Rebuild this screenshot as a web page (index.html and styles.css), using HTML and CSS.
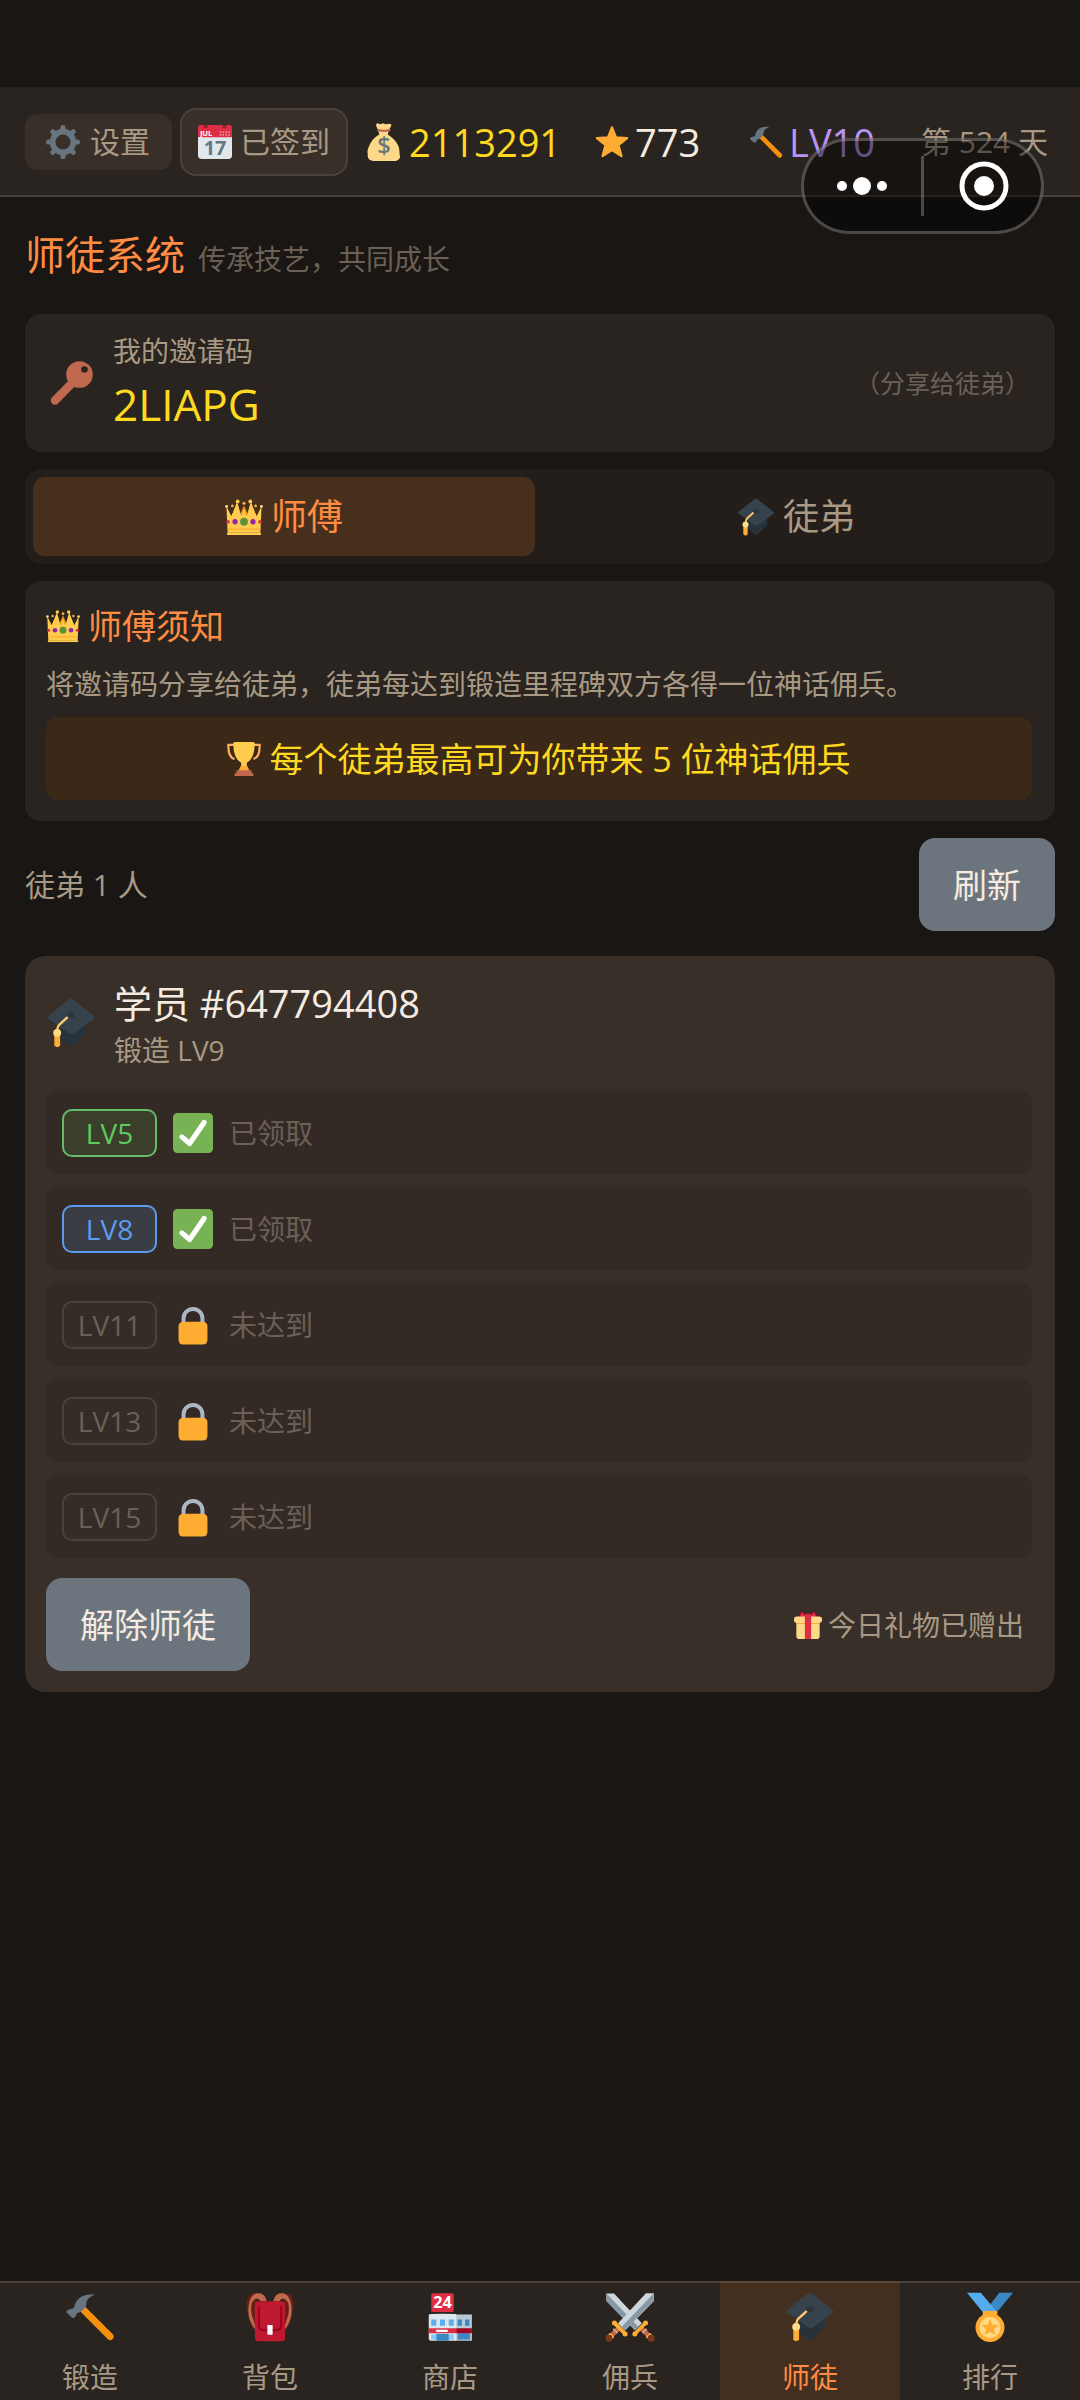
FILE: index.html
```html
<!DOCTYPE html>
<html lang="zh-CN">
<head>
<meta charset="utf-8">
<meta name="viewport" content="width=device-width, initial-scale=1">
<title>师徒系统</title>
<link rel="stylesheet" href="styles.css">
</head>
<body>
<svg class="sprite" aria-hidden="true">
  <symbol id="gear" viewBox="0 0 36 36">
    <circle cx="18" cy="18" r="11" fill="none" stroke="#66757f" stroke-width="6"/>
    <path d="M18 5V2.700M18 31v2.300M5 18H2.700M31 18h2.300M8.800 8.800 7.200 7.200M27.200 27.200l1.600 1.600M8.800 27.200l-1.600 1.600M27.200 8.800l1.600-1.600" stroke="#66757f" stroke-width="5.400" stroke-linecap="round"/>
  </symbol>
  <symbol id="star" viewBox="0 0 36 36">
    <path d="M18 2.500 22.200 13.200 34 13.800 24.800 21.200 28 33 18 26.500 8 33 11.200 21.200 2 13.800 13.800 13.200z" fill="#ffac33" stroke="#ffac33" stroke-width="2.400" stroke-linejoin="round"/>
  </symbol>
  <symbol id="hammer" viewBox="0 0 36 36">
    <path d="M13 12.500 32.500 32" stroke="#f4900c" stroke-width="5" stroke-linecap="round"/>
    <path d="M1.500 13.500C3 12 6 12.500 6.500 11 8 4.500 13 .800 21.500 2c-4 1.500-6 3.500-6.200 7 .4 1.600-4.300 6.500-6 6-1.300.2-.8 2-2.300 3.300-1 .8-1.800.4-2.500-.3L1.300 15c-.5-.5-.4-1 .2-1.500z" fill="#66757f"/>
  </symbol>
  <symbol id="key" viewBox="0 0 44 44">
    <path d="M25 19 5 39.500" stroke="#c1694f" stroke-width="8.500" stroke-linecap="round"/>
    <circle cx="29.500" cy="13.500" r="13.300" fill="#c1694f"/>
    <circle cx="34.500" cy="8.500" r="3.300" fill="#2b241f"/>
    <path d="M12 26 9 29l-1-2zM6 31l-4 4 0-3z" fill="#29241f"/>
  </symbol>
  <symbol id="crown" viewBox="0 0 36 36">
    <path d="M3 12l3 5 4-8 4 7 4-9 4 9 4-7 4 8 3-5v12H3z" fill="#f4900c"/>
    <circle cx="7" cy="7.500" r="1.300" fill="#ffac33"/><circle cx="18" cy="5" r="1.500" fill="#ffac33"/><circle cx="29" cy="7.500" r="1.300" fill="#ffac33"/>
    <path d="M2.500 33 1.300 7.500 6 17.500 11.500 3.500l4 14L18 10l2.500 7.500 4-14L30 17.500l4.700-10L33.500 33z" fill="#ffcc4d"/>
    <circle cx="12" cy="3.200" r="1.800" fill="#ffcc4d"/><circle cx="24" cy="3.200" r="1.800" fill="#ffcc4d"/><circle cx="1.500" cy="8" r="1.400" fill="#ffd983"/><circle cx="34.500" cy="8" r="1.400" fill="#ffd983"/>
    <path d="M2.500 29.500h31" stroke="#ffac33" stroke-width="1.300"/><path d="M2 34h32" stroke="#ffcc4d" stroke-width="2"/>
    <circle cx="18" cy="22.500" r="3.700" fill="#5c913b"/><circle cx="9.500" cy="22.500" r="2.500" fill="#9226aa"/><circle cx="26.500" cy="22.500" r="2.500" fill="#9226aa"/>
    <circle cx="2.800" cy="22.500" r="1.700" fill="#dd2e44"/><circle cx="33.200" cy="22.500" r="1.700" fill="#dd2e44"/>
  </symbol>
  <symbol id="cap" viewBox="0 0 36 38">
    <path d="M10 19l18-5c2 3 1.500 11 .5 14L20 36c-1 .8-3 .8-4 0l-6-5z" fill="#28323a"/>
    <path d="M16.300 1.200c1-.8 2.400-.8 3.400 0L35.300 13.700c.8.600.8 1.500 0 2.200L21 26.500c-1.500 1.200-3.500 1.200-5 0L.800 15.800c-.8-.6-.8-1.500 0-2.200z" fill="#37434c"/>
    <ellipse cx="18" cy="13" rx="3" ry="2.400" fill="#2d363d"/>
    <path d="M15 15 9 20.500Q7.500 22 7.500 26" stroke="#ffcc6b" stroke-width="1.800" fill="none" stroke-linecap="round"/>
    <path d="M5.300 27h4.400v9q-2.200 3-4.400 0z" fill="#ffac33"/><circle cx="7.500" cy="26.500" r="3" fill="#ffd983"/>
  </symbol>
  <symbol id="trophy" viewBox="0 0 36 36">
    <path d="M8 3H1.500Q1 16 8 18M28 3h6.500Q35 16 28 18" stroke="#ffac62" stroke-width="2.400" fill="none"/>
    <path d="M6.500 1.500Q7 0 8.500 0h19q1.500 0 2 1.500Q29 18 21 22v3l3 6H12l3-6v-3Q7 18 6.500 1.500z" fill="#ffcc4d"/>
    <path d="M15 25.500h6l3 5.500H12z" fill="#ffac33"/>
    <path d="M10 30h16v3h2v3H8v-3h2z" fill="#c1694f"/>
  </symbol>
  <symbol id="check" viewBox="0 0 36 36">
    <rect width="36" height="36" rx="4" fill="#77b255"/>
    <path d="M8 21.500 15 27.500 28 8.500" fill="none" stroke="#fff" stroke-width="4.600" stroke-linecap="round" stroke-linejoin="round"/>
  </symbol>
  <symbol id="lock" viewBox="0 0 36 36">
    <path d="M9.500 18V12a8.500 8.500 0 0 1 17 0v6" fill="none" stroke="#aab8c2" stroke-width="3.600"/>
    <rect x="5" y="15" width="26" height="20.500" rx="4" fill="#ffac33"/>
  </symbol>
  <symbol id="gift" viewBox="0 0 36 36">
    <path d="M18 6Q13 0 9 1L5 8h26l-4-7q-4-1-9 5z" fill="#a0041e"/><path d="M10 1l-3 7h9zM26 1l3 7h-9z" fill="#dd2e44"/>
    <path d="M3 13h30v19a4 4 0 0 1-4 4H7a4 4 0 0 1-4-4z" fill="#fdd888"/><path d="M3 16h30" stroke="#fcab40" stroke-width="1.400"/>
    <rect y="7" width="36" height="8" rx="3.500" fill="#fdd888"/><path d="M14 5q4-3 8 0v31h-8z" fill="#dd2e44"/>
  </symbol>
  <symbol id="pack" viewBox="0 0 36 38">
    <path d="M8 1Q-1 0 .5 12 1.500 25 8 31zM28 1q9-1 7.500 11Q34.500 25 28 31z" fill="#662113"/>
    <path d="M2.500 7Q4 2 8 1q6-1 7.500 6H11Q8 3 5 7Q3 9 4 17L8 30Q-1 20 2.500 7zM33.500 7Q32 2 28 1q-6-1-7.500 6H25q3-4 6 0 2 2 1 10L28 30q9-10 5.500-23z" fill="#c1694f"/>
    <rect x="6.500" y="7" width="23" height="30.500" rx="3" fill="#be1931"/>
    <path d="M9.500 10.500V25q0 4 4 4h9q4 0 4-4V10.500" fill="none" stroke="#a0041e" stroke-width="1.700"/>
    <rect x="16" y="25" width="4" height="7.500" rx=".5" fill="#fff"/>
  </symbol>
  <symbol id="swords" viewBox="0 0 36 36">
    <g id="sword">
      <path d="M35 1v5.500L14.500 27.500 9.500 22.500 29.500 1z" fill="#ccd6dd"/><path d="M35 1v5.500L14.500 27.500 12 25z" fill="#8899a6"/>
      <path d="M11 25 3.500 32.500" stroke="#c1694f" stroke-width="3.400"/><path d="M6 26.500l3 3" stroke="#e6a08a" stroke-width="1.300"/>
      <path d="M7 22.500 14.500 30" stroke="#ffac33" stroke-width="2.600" stroke-linecap="round"/><circle cx="6.800" cy="22.300" r="1.800" fill="#ffac33"/><circle cx="14.500" cy="30.200" r="1.800" fill="#ffac33"/>
      <path d="M3.500 30.500l2 2" stroke="#ffac33" stroke-width="2" stroke-linecap="round"/><circle cx="2.800" cy="33.300" r="2.500" fill="#7b3722"/>
    </g>
    <use href="#sword" transform="translate(36 0) scale(-1 1)"/>
    <path d="M35 1v5.500L14.500 27.500 9.500 22.500 29.500 1z" fill="#ccd6dd"/><path d="M35 1v5.500L14.500 27.500 12 25z" fill="#8899a6"/>
    <path d="M7 22.500 14.500 30" stroke="#ffac33" stroke-width="2.600" stroke-linecap="round"/>
  </symbol>
  <symbol id="medal" viewBox="0 0 36 38">
    <path d="M25 .5h10.500L22 17l-5-6z" fill="#3b88c3"/><path d="M.5.500H11L24 16H13z" fill="#55acee"/>
    <rect x="12.500" y="14.500" width="11" height="5" rx="1" fill="#ffac33"/>
    <circle cx="18" cy="27" r="11" fill="#ffac33"/><circle cx="18" cy="27" r="8" fill="#ffd983"/>
    <path d="M18 20.500l1.800 4.300 4.700.4-3.600 3 1.100 4.500-4-2.400-4 2.400 1.100-4.500-3.600-3 4.700-.4z" fill="#ffac33"/>
  </symbol>
</svg>

<div class="app">
  <header class="topbar">
    <button class="chip" type="button"><svg class="ico ico-m"><use href="#gear"/></svg>设置</button>
    <button class="chip chip-outlined" type="button">
      <svg class="ico ico-m" viewBox="0 0 36 36">
        <path d="M0 11h36v21a4 4 0 0 1-4 4H4a4 4 0 0 1-4-4z" fill="#e1e8ed"/>
        <path d="M3 0h30a3 3 0 0 1 3 3v10H0V3a3 3 0 0 1 3-3z" fill="#dd2e44"/>
        <circle cx="8" cy="1" r="2.600" fill="#992233"/><circle cx="28" cy="1" r="2.600" fill="#992233"/>
        <path d="M23 7.500h11M23 10.500h11" stroke="#f5b8c0" stroke-width="1.300" stroke-dasharray="1.600 1.400"/>
        <text x="2" y="11.500" font-size="8" font-weight="700" fill="#fff">JUL</text>
        <text x="18" y="32" font-size="21" font-weight="700" text-anchor="middle" fill="#66757f">17</text>
      </svg>已签到</button>
    <div class="stats">
      <span class="stat gold">
        <svg class="ico ico-l" viewBox="0 0 36 40">
          <path d="M12 8C11 5 9 3 10 1c2-2 3 1 5 0s2-1 4 0 3-1 5 0c4 0 0 4-1 7l-1 4c5 3 11 9 12 15 .6 4 0 6 1 8 0 3-3 5-6 5H7c-4 0-7-3-6-7-1-3 0-5 1-8 2-6 6-10 11-13z" fill="#fdd888"/>
          <path d="M12 7.500c4 1 8 1 12 0" stroke="#bf6952" stroke-width="2.200" stroke-linecap="round" fill="none"/>
          <text x="18" y="33" font-size="25" font-weight="600" text-anchor="middle" fill="#67757f">$</text>
        </svg>2113291</span>
      <span class="stat fame"><svg class="ico ico-m"><use href="#star"/></svg>773</span>
      <span class="stat purple"><svg class="ico ico-m"><use href="#hammer"/></svg>LV10</span>
      <span class="day">第 524 天</span>
    </div>
  </header>

  <div class="capsule">
    <button type="button" aria-label="更多"><svg width="60" height="60" viewBox="0 0 60 60" fill="#fff"><circle cx="9" cy="30" r="5"/><circle cx="29" cy="30" r="9"/><circle cx="49" cy="30" r="5"/></svg></button>
    <button type="button" aria-label="关闭"><svg width="60" height="60" viewBox="0 0 60 60" fill="#fff"><circle cx="31" cy="30" r="22" fill="none" stroke="#fff" stroke-width="5"/><circle cx="31" cy="30" r="10"/></svg></button>
  </div>

  <main class="content">
    <div class="heading"><h1>师徒系统</h1><p>传承技艺，共同成长</p></div>

    <section class="card invite">
      <svg class="ico ico-key"><use href="#key"/></svg>
      <div class="invite-body"><p class="invite-label">我的邀请码</p><p class="invite-code">2LIAPG</p></div>
      <span class="invite-hint">（分享给徒弟）</span>
    </section>

    <div class="tabs" role="tablist">
      <button class="tab active" type="button" role="tab" aria-selected="true"><svg class="ico ico-l"><use href="#crown"/></svg>师傅</button>
      <button class="tab" type="button" role="tab" aria-selected="false"><svg class="ico ico-l"><use href="#cap"/></svg>徒弟</button>
    </div>

    <section class="card notice">
      <h2><svg class="ico ico-m"><use href="#crown"/></svg>师傅须知</h2>
      <p>将邀请码分享给徒弟，徒弟每达到锻造里程碑双方各得一位神话佣兵。</p>
      <div class="highlight"><svg class="ico ico-m"><use href="#trophy"/></svg>每个徒弟最高可为你带来 5 位神话佣兵</div>
    </section>

    <div class="list-head"><span>徒弟 1 人</span><button class="btn" type="button">刷新</button></div>

    <section class="student">
      <div class="student-head">
        <svg class="ico ico-xl"><use href="#cap"/></svg>
        <div><h3>学员 #647794408</h3><p>锻造 LV9</p></div>
      </div>
      <ul class="milestones">
        <li><span class="badge green">LV5</span><svg class="ico ico-s"><use href="#check"/></svg>已领取</li>
        <li><span class="badge blue">LV8</span><svg class="ico ico-s"><use href="#check"/></svg>已领取</li>
        <li><span class="badge">LV11</span><svg class="ico ico-s"><use href="#lock"/></svg>未达到</li>
        <li><span class="badge">LV13</span><svg class="ico ico-s"><use href="#lock"/></svg>未达到</li>
        <li><span class="badge">LV15</span><svg class="ico ico-s"><use href="#lock"/></svg>未达到</li>
      </ul>
      <div class="student-foot">
        <button class="btn" type="button">解除师徒</button>
        <span class="gift"><svg class="ico ico-gift"><use href="#gift"/></svg>今日礼物已赠出</span>
      </div>
    </section>
  </main>

  <nav class="nav">
    <a href="#forge"><svg class="ico ico-xl"><use href="#hammer"/></svg>锻造</a>
    <a href="#backpack"><svg class="ico ico-xl"><use href="#pack"/></svg>背包</a>
    <a href="#shop">
      <svg class="ico ico-xl" viewBox="0 0 36 40">
        <rect x="3" y="1" width="18" height="15" rx="1.500" fill="#dd2e44"/>
        <text x="12" y="13" font-size="13" font-weight="700" text-anchor="middle" fill="#fff">24</text>
        <rect x="22" y="18" width="13.500" height="21" fill="#b9cad6"/><path d="M1 18q1-1 22-.5V39H2q-1-1-1-2z" fill="#dbe6ed"/>
        <path d="M3 22h4v5H3zM10 22h4v5h-4zM17 22h4v5h-4z" fill="#5dadec"/><path d="M24 22h3.500v5H24zM30 22h3.500v5H30zM24 33h10v5H24z" fill="#3b88c3"/>
        <path d="M1 29h22v4H1z" fill="#dd2e44"/><path d="M23 29h12.500v4H23z" fill="#a0041e"/><path d="M7.500 31h8" stroke="#fff" stroke-width="1.800" stroke-linecap="round"/>
        <path d="M3 34h4v4H3zM17 34h4v4h-4z" fill="#88c9f9"/><path d="M7 33.500h10V39H7z" fill="#3b88c3"/>
      </svg>商店</a>
    <a href="#mercenary"><svg class="ico ico-xl"><use href="#swords"/></svg>佣兵</a>
    <a href="#mentor" class="active" aria-current="page"><svg class="ico ico-xl"><use href="#cap"/></svg>师徒</a>
    <a href="#ranking"><svg class="ico ico-xl"><use href="#medal"/></svg>排行</a>
  </nav>
</div>
</body>
</html>
```
FILE: styles.css
```css
:root {
  --bg: #1a1613;
  --bar: #2a2420;
  --card: #29241f;
  --line: #4a413a;
  --text: #f5ebe0;
  --muted: #a89984;
  --dim: #6b6055;
  --orange: #ff8c42;
  --gold: #ffd91f;
}

* { box-sizing: border-box; }

body {
  margin: 0;
  background: var(--bg);
  color: var(--text);
  font-family: "Open Sans", "Noto Sans CJK SC", sans-serif;
  font-size: 28px;
  line-height: 40px;
}

h1, h2, h3, p, ul { margin: 0; padding: 0; font-weight: 400; }

button {
  border: 0;
  padding: 0;
  background: none;
  color: inherit;
  font: inherit;
}

.sprite { position: absolute; width: 0; height: 0; }

.ico { flex: none; display: block; }
.ico-gift { width: 28px; height: 28px; }
.ico-m { width: 34px; height: 34px; }
.ico-l { width: 38px; height: 38px; }
.ico-s { width: 40px; height: 40px; }
.ico-key { width: 44px; height: 44px; }
.ico-xl { width: 50px; height: 50px; }

.app {
  position: relative;
  display: flex;
  flex-direction: column;
  min-height: 100vh;
  padding-top: 87px;
}

/* top bar */
.topbar {
  display: flex;
  align-items: center;
  gap: 8px;
  padding: 21px 32px 19px 25px;
  background: var(--bar);
  border-bottom: 2px solid var(--line);
}

.chip {
  display: flex;
  align-items: center;
  gap: 10px;
  height: 56px;
  padding: 0 22px 0 21px;
  border-radius: 13px;
  background: #382f29;
  color: var(--muted);
  font-size: 30px;
}

.chip-outlined {
  gap: 8px;
  height: 68px;
  padding: 0 16px;
  border: 2px solid var(--line);
  border-radius: 16px;
}

.stats {
  flex: 1;
  display: flex;
  align-items: center;
  gap: 34px;
  padding-left: 9px;
}

.stat {
  display: flex;
  align-items: center;
  gap: 6px;
  font-size: 38px;
}

.gold { color: var(--gold); }
.fame { min-width: 120px; }
.purple { color: #b794f6; }
.day { margin-left: auto; color: var(--muted); font-size: 30px; }

.capsule {
  position: absolute;
  top: 138px;
  right: 36px;
  display: flex;
  width: 243px;
  height: 96px;
  padding: 15px 0;
  border: 3px solid rgba(255, 255, 255, 0.25);
  border-radius: 48px;
  background: rgba(0, 0, 0, 0.45);
}

.capsule button {
  flex: 1;
  display: flex;
  align-items: center;
  justify-content: center;
}

.capsule button + button { border-left: 3px solid rgba(255, 255, 255, 0.25); }

/* page content */
.content {
  flex: 1;
  display: flex;
  flex-direction: column;
  gap: 17px;
  padding: 16px 25px;
}

.heading {
  display: flex;
  align-items: baseline;
  gap: 13px;
  padding: 14px 0;
  color: var(--dim);
}

.heading h1 { color: var(--orange); font-size: 40px; line-height: 56px; }

.card { border-radius: 16px; background: var(--card); }

.invite {
  display: flex;
  align-items: center;
  gap: 19px;
  padding: 16px 25px;
}

.invite-body { flex: 1; }
.invite-label { color: var(--muted); line-height: 42px; }
.invite-code { color: var(--gold); font-size: 44px; line-height: 64px; }
.invite-hint { color: var(--dim); font-size: 25px; }

.tabs {
  display: flex;
  gap: 10px;
  padding: 8px;
  border-radius: 16px;
  background: #241e1a;
}

.tab {
  flex: 1;
  display: flex;
  align-items: center;
  justify-content: center;
  gap: 8px;
  height: 79px;
  border-radius: 12px;
  color: var(--muted);
  font-size: 36px;
}

.tab.active { background: #472f1e; color: var(--orange); }

.notice { padding: 21px 23px 21px 21px; }

.notice h2 {
  display: flex;
  align-items: center;
  gap: 8px;
  color: var(--orange);
  font-size: 34px;
  line-height: 48px;
}

.notice p { margin: 14px 0 13px; color: var(--muted); }

.highlight {
  display: flex;
  align-items: center;
  justify-content: center;
  gap: 8px;
  min-height: 83px;
  border-radius: 12px;
  background: #3b2816;
  color: var(--gold);
  font-size: 34px;
}

.list-head {
  display: flex;
  align-items: center;
  justify-content: space-between;
  margin-bottom: 8px;
  color: var(--muted);
  font-size: 30px;
}

.btn {
  height: 93px;
  padding: 0 34px;
  border-radius: 16px;
  background: #6c757d;
  color: var(--text);
  font-size: 34px;
}

.student {
  padding: 20px 23px 21px 21px;
  border-radius: 20px;
  background: #382f29;
}

.student-head {
  display: flex;
  align-items: center;
  gap: 18px;
  margin-bottom: 21px;
}

.student-head h3 { font-size: 38px; line-height: 54px; }
.student-head p { color: var(--muted); }

.milestones {
  display: flex;
  flex-direction: column;
  gap: 13px;
  list-style: none;
}

.milestones li {
  display: flex;
  align-items: center;
  gap: 16px;
  min-height: 83px;
  padding: 0 16px;
  border-radius: 12px;
  background: #342a25;
  color: var(--dim);
}

.badge {
  width: 95px;
  border: 2px solid #4c423b;
  border-radius: 10px;
  background: #332c27;
  line-height: 44px;
  text-align: center;
}

.green { border-color: #66bb6a; background: #3b3e2b; color: #5ecb5e; }
.blue { border-color: #5b9cf0; background: #3a3d43; color: #5b9cf0; }

.student-foot {
  display: flex;
  align-items: center;
  justify-content: space-between;
  margin-top: 20px;
}

.gift {
  display: flex;
  align-items: center;
  gap: 6px;
  padding-right: 8px;
  color: var(--muted);
}

/* bottom navigation */
.nav {
  display: flex;
  background: var(--bar);
}

.nav a {
  flex: 1;
  display: flex;
  flex-direction: column;
  align-items: center;
  gap: 15px;
  padding: 9px 0 3px;
  border-top: 2px solid var(--line);
  color: var(--muted);
  text-decoration: none;
}

.nav a.active { border-color: #5d4736; background: #432f20; color: var(--orange); }
```
